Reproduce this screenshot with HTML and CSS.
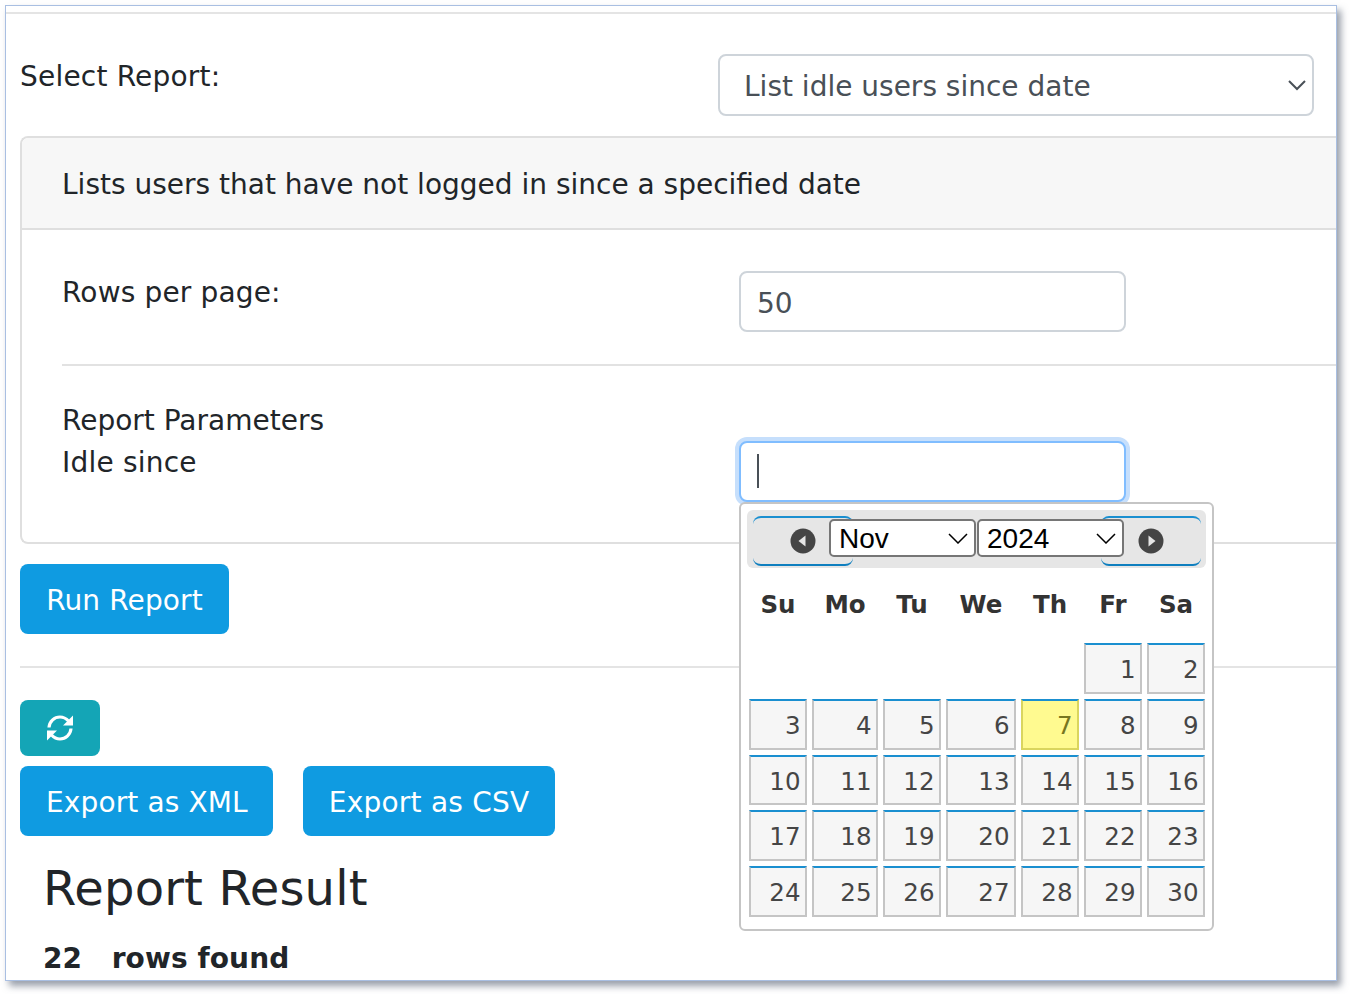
FILE: index.html
```html
<!DOCTYPE html>
<html lang="en">
<head>
    <meta charset="UTF-8">
    <title>Report</title>
    <link rel="stylesheet" href="styles.css">
</head>
<body>
    <div class="window">
        <hr class="top-rule">

        <div class="report-select">
            <label class="select-label">Select Report:</label>
            <select class="form-control report-control">
                <option>List idle users since date</option>
            </select>
        </div>

        <div class="card">
            <div class="card-header">Lists users that have not logged in since a specified date</div>
            <div class="card-body">
                <div class="form-row rows-row">
                    <label>Rows per page:</label>
                    <input class="form-control field" type="text" value="50">
                </div>
                <hr class="row-rule">
                <div class="form-row params-row">
                    <div class="param-labels">
                        <div>Report Parameters</div>
                        <div class="idle-label">Idle since</div>
                    </div>
                    <div class="date-field">
                        <input class="form-control field focused" type="text">
                        <span class="caret"></span>

                        <div class="datepicker">
                            <div class="dp-header">
                                <a class="dp-nav dp-prev">
                                    <svg width="26" height="26" viewBox="0 0 26 26"><circle cx="13" cy="13" r="12.5" fill="#454545"/><path d="M15.5 7.5v11L8.5 13z" fill="#e6e6e6"/></svg>
                                </a>
                                <a class="dp-nav dp-next">
                                    <svg width="26" height="26" viewBox="0 0 26 26"><circle cx="13" cy="13" r="12.5" fill="#454545"/><path d="M10.5 7.5v11l7-5.5z" fill="#e6e6e6"/></svg>
                                </a>
                                <select class="dp-select"><option>Nov</option></select>
                                <select class="dp-select"><option>2024</option></select>
                            </div>
                            <div class="dp-grid">
                                <span class="dp-day">Su</span>
                                <span class="dp-day">Mo</span>
                                <span class="dp-day">Tu</span>
                                <span class="dp-day">We</span>
                                <span class="dp-day">Th</span>
                                <span class="dp-day">Fr</span>
                                <span class="dp-day">Sa</span>

                                <span></span><span></span><span></span><span></span><span></span>
                                <a class="dp-date">1</a><a class="dp-date">2</a>

                                <a class="dp-date">3</a><a class="dp-date">4</a><a class="dp-date">5</a><a class="dp-date">6</a>
                                <a class="dp-date today">7</a><a class="dp-date">8</a><a class="dp-date">9</a>

                                <a class="dp-date">10</a><a class="dp-date">11</a><a class="dp-date">12</a><a class="dp-date">13</a>
                                <a class="dp-date">14</a><a class="dp-date">15</a><a class="dp-date">16</a>

                                <a class="dp-date">17</a><a class="dp-date">18</a><a class="dp-date">19</a><a class="dp-date">20</a>
                                <a class="dp-date">21</a><a class="dp-date">22</a><a class="dp-date">23</a>

                                <a class="dp-date">24</a><a class="dp-date">25</a><a class="dp-date">26</a><a class="dp-date">27</a>
                                <a class="dp-date">28</a><a class="dp-date">29</a><a class="dp-date">30</a>
                            </div>
                        </div>
                    </div>
                </div>
            </div>
        </div>

        <button class="btn run-btn">Run Report</button>
        <hr class="section-rule">

        <button class="btn-refresh">
            <svg width="28" height="28" viewBox="0 0 28 28">
                <path d="M3 13.5C3.5 7 8.500 3 14 3c3.500 0 6 1.300 8.500 4" fill="none" stroke="#fff" stroke-width="3.200"/>
                <path d="M27 1.500V11.500H17z" fill="#fff"/>
                <path d="M25 14.500C24.500 21 19.500 25 14 25c-3.500 0-6-1.300-8.500-4" fill="none" stroke="#fff" stroke-width="3.200"/>
                <path d="M1 26.500V16.500H11z" fill="#fff"/>
            </svg>
        </button>
        <div class="export-row">
            <button class="btn">Export as XML</button>
            <button class="btn csv-btn">Export as CSV</button>
        </div>

        <h2 class="result-title">Report Result</h2>
        <p class="result-count"><span>22</span>rows found</p>
    </div>
</body>
</html>
```

FILE: styles.css
```css
* {
    box-sizing: border-box;
}
body {
    margin: 0;
    height: 994px;
    background: #fff;
    overflow: hidden;
    font-family: "DejaVu Sans", sans-serif;
    font-size: 28px;
    color: #212529;
}
.window {
    margin: 5px 0 0 5px;
    width: 1332px;
    height: 976px;
    padding-top: 6px;
    background: #fff;
    border: 1px solid #a9bfe2;
    box-shadow: 4px 5px 7px rgba(70, 80, 100, 0.55);
    overflow: hidden;
}
hr {
    border: 0;
    margin: 0;
    height: 2px;
    background: #e4e4e4;
}
.report-select {
    display: flex;
    padding: 40px 22px 0 14px;
    height: 122px;
}
.select-label {
    width: 698px;
    line-height: 46px;
    letter-spacing: 0.2px;
}
.form-control {
    display: block;
    height: 61px;
    padding: 3px 23px 0;
    font-family: "DejaVu Sans", sans-serif;
    font-size: 28px;
    color: #495057;
    background: #fff;
    border: 2px solid #ced4da;
    border-radius: 8px;
    outline: none;
}
.report-control {
    width: 596px;
    height: 62px;
    padding-left: 24px;
    appearance: none;
    background-image: url("data:image/svg+xml,%3Csvg xmlns='http://www.w3.org/2000/svg' width='18' height='12' viewBox='0 0 18 12'%3E%3Cpath d='M1 2l8 8 8-8' fill='none' stroke='%23495057' stroke-width='2'/%3E%3C/svg%3E");
    background-repeat: no-repeat;
    background-position: right 6px center;
}
.card {
    margin: 0 -4px 0 14px;
    height: 408px;
    border: 2px solid #dfdfdf;
    border-right: 0;
    border-radius: 8px 0 0 8px;
}
.card-header {
    height: 92px;
    padding-left: 40px;
    line-height: 94px;
    background: #f7f7f7;
    border-bottom: 2px solid #dfdfdf;
    border-radius: 6px 0 0 0;
}
.card-body {
    padding-left: 40px;
}
.form-row {
    display: flex;
}
.form-row label,
.param-labels {
    width: 677px;
}
.rows-row {
    padding-top: 41px;
    height: 134px;
}
.rows-row label {
    line-height: 44px;
    letter-spacing: 0.15px;
}
.field {
    width: 387px;
    padding: 3px 16px 0;
}
.row-rule {
    background: #e2e2e2;
}
.params-row {
    padding-top: 34px;
}
.param-labels {
    line-height: 42px;
}
.idle-label {
    letter-spacing: 0.2px;
}
.date-field {
    position: relative;
    margin-top: 41px;
}
.focused {
    border-color: #80bdff;
    box-shadow: 0 0 0 4px #c6dffc;
}
.caret {
    position: absolute;
    left: 18px;
    top: 13px;
    width: 2px;
    height: 34px;
    background: #495057;
}
.datepicker {
    position: absolute;
    left: 0;
    top: 61px;
    width: 475px;
    height: 429px;
    padding: 6px;
    background: #fff;
    border: 2px solid #c5c5c5;
    border-radius: 6px;
    z-index: 2;
}
.dp-header {
    position: relative;
    display: flex;
    justify-content: center;
    align-items: center;
    gap: 1px;
    height: 58px;
    background: #e6e6e6;
    border-radius: 6px;
}
.dp-nav {
    position: absolute;
    top: 6px;
    display: flex;
    align-items: center;
    width: 100px;
    height: 50px;
    border-top: 2px solid #1a8fd0;
    border-bottom: 2px solid #0f7fbf;
    border-radius: 8px;
}
.dp-prev {
    left: 6px;
    justify-content: flex-end;
    padding-right: 37px;
}
.dp-next {
    right: 5px;
    padding-left: 37px;
}
.dp-select {
    position: relative;
    width: 147px;
    height: 38px;
    margin-bottom: 2px;
    padding: 0 8px;
    font-family: "Liberation Sans", sans-serif;
    font-size: 28px;
    color: #000;
    appearance: none;
    background: #fff url("data:image/svg+xml,%3Csvg xmlns='http://www.w3.org/2000/svg' width='20' height='12' viewBox='0 0 20 12'%3E%3Cpath d='M1 2l9 9 9-9' fill='none' stroke='%23000' stroke-width='1.500'/%3E%3C/svg%3E") no-repeat right 6px center;
    border: 2px solid #767676;
    border-radius: 5px;
}
.dp-grid {
    display: grid;
    grid-template-columns: 58px 66px 58px 70px 58px 58px 58px;
    grid-template-rows: 70px repeat(5, 50.75px);
    gap: 5px 5px;
    margin-left: 2px;
}
.dp-day {
    align-self: center;
    text-align: center;
    font-size: 24.5px;
    font-weight: bold;
    color: #333;
    padding: 2px 0 0 0;
}
.dp-date {
    padding-right: 4.5px;
    text-align: right;
    line-height: 49px;
    font-size: 24.5px;
    color: #454545;
    background: #f6f6f6;
    border: 2px solid #c5c5c5;
    border-top-color: #1a8fd0;
}
.today {
    background: #fffa90;
    border-color: #dad55e;
    border-top-color: #1a8fd0;
    color: #777620;
}
.btn {
    display: block;
    height: 70px;
    padding: 2px 26px 0;
    font-family: "DejaVu Sans", sans-serif;
    font-size: 28px;
    letter-spacing: 0.12px;
    color: #fff;
    background: #0f9be1;
    border: 0;
    border-radius: 8px;
}
.run-btn {
    margin: 20px 0 0 14px;
    width: 209px;
}
.section-rule {
    margin: 32px 0 0 14px;
}
.btn-refresh {
    display: flex;
    justify-content: center;
    align-items: center;
    width: 80px;
    height: 56px;
    padding: 0;
    margin: 32px 0 0 14px;
    background: #14a5b6;
    border: 0;
    border-radius: 8px;
}
.export-row {
    display: flex;
    gap: 29.5px;
    margin: 10px 0 0 14px;
}
.export-row .btn {
    padding-right: 25.5px;
}
.export-row .csv-btn {
    letter-spacing: 0.24px;
}
.result-title {
    margin: 22px 0 0 37px;
    font-size: 48px;
    font-weight: normal;
    line-height: 60px;
    letter-spacing: 0.15px;
}
.result-count {
    margin: 21px 0 0 37px;
    font-weight: bold;
    line-height: 40px;
    letter-spacing: 0.1px;
}
.result-count span {
    margin-right: 29.5px;
}
```
